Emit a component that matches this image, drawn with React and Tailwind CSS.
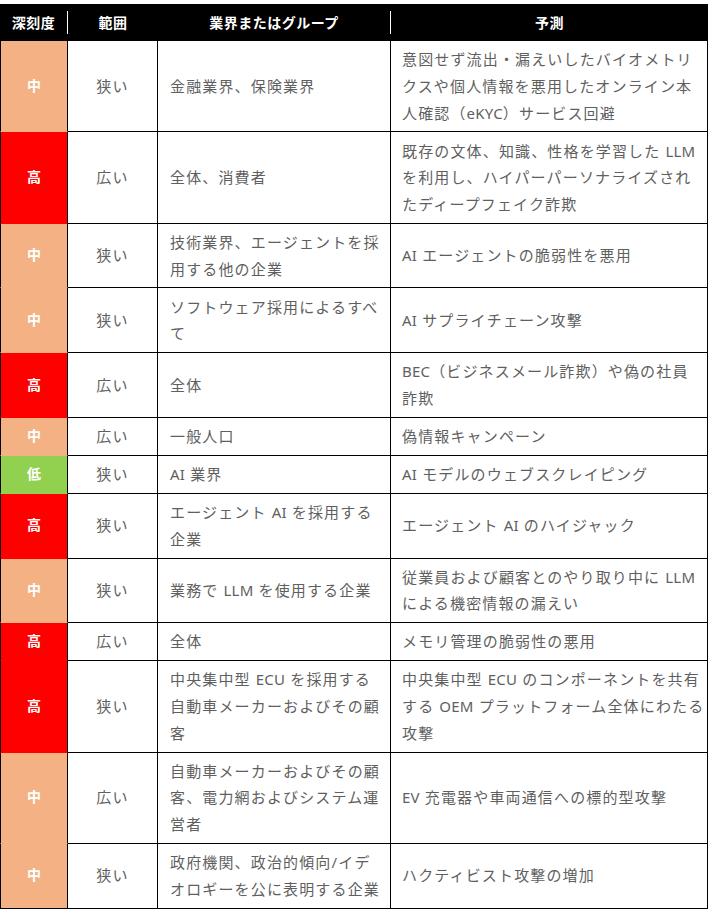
import React from "react";

const rows = [
  { level: "中", scope: "狭い", group: ["金融業界、保険業界"], forecast: ["意図せず流出・漏えいしたバイオメトリ", "クスや個人情報を悪用したオンライン本", "人確認（eKYC）サービス回避"] },
  { level: "高", scope: "広い", group: ["全体、消費者"], forecast: ["既存の文体、知識、性格を学習した LLM", "を利用し、ハイパーパーソナライズされ", "たディープフェイク詐欺"] },
  { level: "中", scope: "狭い", group: ["技術業界、エージェントを採", "用する他の企業"], forecast: ["AI エージェントの脆弱性を悪用"] },
  { level: "中", scope: "狭い", group: ["ソフトウェア採用によるすべ", "て"], forecast: ["AI サプライチェーン攻撃"] },
  { level: "高", scope: "広い", group: ["全体"], forecast: ["BEC（ビジネスメール詐欺）や偽の社員", "詐欺"] },
  { level: "中", scope: "広い", group: ["一般人口"], forecast: ["偽情報キャンペーン"] },
  { level: "低", scope: "狭い", group: ["AI 業界"], forecast: ["AI モデルのウェブスクレイピング"] },
  { level: "高", scope: "狭い", group: ["エージェント AI を採用する", "企業"], forecast: ["エージェント AI のハイジャック"] },
  { level: "中", scope: "狭い", group: ["業務で LLM を使用する企業"], forecast: ["従業員および顧客とのやり取り中に LLM", "による機密情報の漏えい"] },
  { level: "高", scope: "広い", group: ["全体"], forecast: ["メモリ管理の脆弱性の悪用"] },
  { level: "高", scope: "狭い", group: ["中央集中型 ECU を採用する", "自動車メーカーおよびその顧", "客"], forecast: ["中央集中型 ECU のコンポーネントを共有", "する OEM プラットフォーム全体にわたる", "攻撃"] },
  { level: "中", scope: "広い", group: ["自動車メーカーおよびその顧", "客、電力網およびシステム運", "営者"], forecast: ["EV 充電器や車両通信への標的型攻撃"] },
  { level: "中", scope: "狭い", group: ["政府機関、政治的傾向/イデ", "オロギーを公に表明する企業"], forecast: ["ハクティビスト攻撃の増加"] },
];

// full class strings per level so tailwind picks them up
const levelStyle = {
  中: "bg-[#f4b183] border-b-[#f4b183]",
  高: "bg-[#ff0000] border-b-[#ff0000]",
  低: "bg-[#92d050] border-b-[#92d050]",
};

// latin runs are set without the wide CJK tracking
function Line({ text }) {
  const parts = text.split(/([A-Za-z0-9]+(?: [A-Za-z0-9]+)*)/);
  return (
    <div>
      {parts.map((p, i) =>
        i % 2 === 1 ? (
          <span key={i} className="tracking-[0.2px]">{p}</span>
        ) : (
          <span key={i}>{p}</span>
        )
      )}
    </div>
  );
}

function Lines({ lines }) {
  return (
    <div className="whitespace-nowrap">
      {lines.map((l, i) => (
        <Line key={i} text={l} />
      ))}
    </div>
  );
}

function App() {
  return (
    <div className="bg-white min-h-[912px] pt-[4px] font-['Noto_Sans','Noto_Sans_CJK_JP',sans-serif]">
      <div className="w-[708px]">
        <div className="grid grid-cols-[68px_90px_233px_317px] h-[37px] bg-black text-white text-[14px] font-bold tracking-[0.5px]">
          <div className="flex items-center">
            <span className="flex-1 text-center">深刻度</span>
            <span className="w-px h-[23px] bg-white"></span>
          </div>
          <div className="flex items-center justify-center">範囲</div>
          <div className="flex items-center">
            <span className="flex-1 text-center">業界またはグループ</span>
            <span className="w-px h-[23px] bg-white"></span>
          </div>
          <div className="flex items-center justify-center">予測</div>
        </div>

        <div className="grid grid-cols-[68px_90px_233px_317px] text-[15px] leading-[26.7px] tracking-[1.15px] text-[#5f5f5f]">
          {rows.map((r, i) => {
            const last = i === rows.length - 1;
            return (
              <React.Fragment key={i}>
                <div
                  className={`flex items-center justify-center border-l border-r border-b border-l-black border-r-black text-white text-[14px] font-bold tracking-normal ${levelStyle[r.level]} ${last ? "!border-b-black" : ""}`}
                >
                  {r.level}
                </div>
                <div className="flex items-center justify-center border-r border-b border-black py-[5.15px]">
                  {r.scope}
                </div>
                <div className="flex items-center border-r border-b border-black py-[5.15px] pl-[12px]">
                  <Lines lines={r.group} />
                </div>
                <div className="flex items-center border-r border-b border-black py-[5.15px] pl-[11px]">
                  <Lines lines={r.forecast} />
                </div>
              </React.Fragment>
            );
          })}
        </div>
      </div>
    </div>
  );
}

export default App;
